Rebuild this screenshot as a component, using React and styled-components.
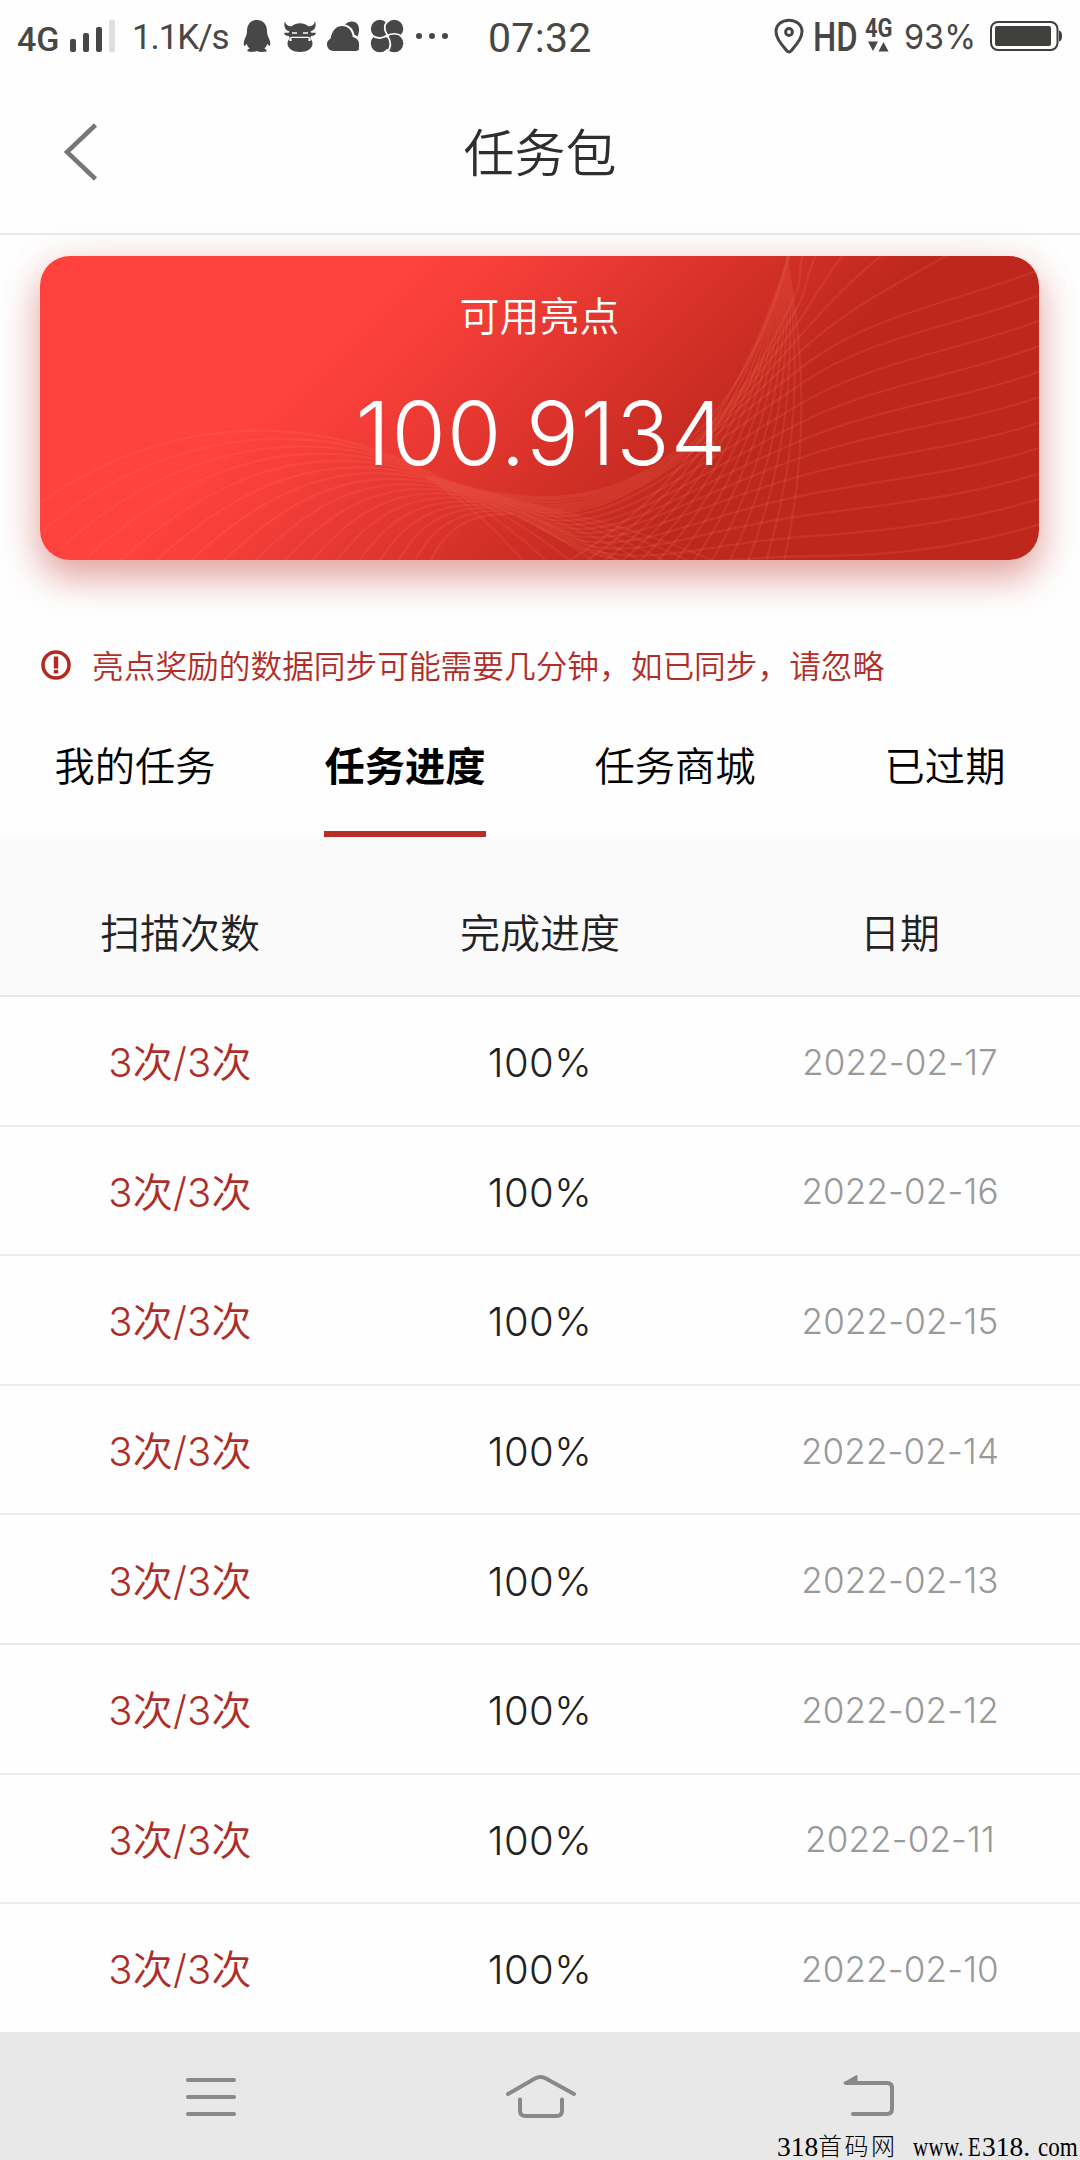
import React from "react";
import styled, { createGlobalStyle } from "styled-components";

const CJK = `"Noto Sans CJK SC", sans-serif`;

const GlobalStyle = createGlobalStyle`
  * { box-sizing: border-box; }
  html, body { margin: 0; padding: 0; background: #fefefe; }
  body { font-family: Inter, ${CJK}; -webkit-font-smoothing: antialiased; }
`;

const Screen = styled.div`
  width: 1080px;
  height: 2160px;
  display: flex;
  flex-direction: column;
  overflow: hidden;
  background: #fefefe;
`;

/* ---------- status bar ---------- */

const StatusBar = styled.header`
  height: 74px;
  flex: none;
  display: flex;
  align-items: flex-start;
  justify-content: space-between;
  padding: 0 17px;
  color: #474747;
`;

const StatusGroup = styled.div`
  display: flex;
  align-items: flex-start;
  height: 74px;
`;

const StatusText = styled.span`
  display: block;
  flex: none;
  width: ${(p) => p.$width}px;
  margin-right: ${(p) => p.$gap || 0}px;
  padding-top: ${(p) => p.$top}px;
  font-family: ${(p) => p.$family || "Roboto"}, sans-serif;
  font-size: ${(p) => p.$size}px;
  font-weight: ${(p) => p.$weight || 400};
  letter-spacing: ${(p) => p.$spacing || 0}px;
  line-height: 1;
  white-space: nowrap;
  transform: scaleX(${(p) => p.$stretch || 1});
  transform-origin: left center;
`;

const StatusIcon = styled.svg`
  display: block;
  flex: none;
  margin-right: ${(p) => p.$gap || 0}px;
`;

const NetworkStack = styled.div`
  width: 28px;
  margin-right: 11px;
  display: flex;
  flex-direction: column;
`;

/* ---------- title bar ---------- */

const TitleBar = styled.div`
  height: 161px;
  flex: none;
  display: grid;
  grid-template-columns: 160px 1fr 160px;
  align-items: center;
  border-bottom: 2px solid #e8e8e8;
`;

const BackButton = styled.button`
  border: 0;
  padding: 0 0 3px 60px;
  background: none;
  height: 100%;
  display: flex;
  align-items: center;
`;

const Title = styled.h1`
  margin: 0;
  padding-bottom: 6px;
  text-align: center;
  font: 350 51px/1 ${CJK};
  color: #2e2e2e;
`;

/* ---------- balance card ---------- */

const Card = styled.section`
  flex: none;
  width: 999px;
  height: 304px;
  margin: 21px auto 0 40px;
  border-radius: 30px;
  overflow: hidden;
  display: grid;
  background: linear-gradient(135deg, #ff423e 28%, #f83f3a 35%, #bd271c 69%);
`;

const CardShadow = styled.div`
  flex: none;
  height: 325px;
  ${Card} {
    box-shadow: 0 18px 36px rgba(190, 40, 30, 0.38), 0 4px 44px rgba(200, 60, 50, 0.1);
  }
`;

const Waves = styled.svg`
  grid-area: 1 / 1;
  display: block;
`;

const Balance = styled.div`
  grid-area: 1 / 1;
  display: flex;
  flex-direction: column;
  align-items: center;
  color: #fff;
  position: relative;
`;

const BalanceLabel = styled.div`
  margin-top: 38px;
  font: 350 40px/40px ${CJK};
`;

const BalanceValue = styled.div`
  margin-top: 55px;
  padding-left: 4px;
  font: 300 88px/88px Inter, sans-serif;
  letter-spacing: 1.3px;
`;

/* ---------- notice ---------- */

const Notice = styled.div`
  flex: none;
  margin-top: 80px;
  height: 50px;
  padding-left: 40px;
  display: flex;
  align-items: center;
  color: #b22d27;
  font: 350 31.7px/50px ${CJK};
  white-space: nowrap;
`;

const NoticeText = styled.span`
  margin-left: 19px;
  padding-bottom: 3px;
`;

/* ---------- tabs ---------- */

const Tabs = styled.nav`
  flex: none;
  height: 147px;
  display: grid;
  grid-template-columns: repeat(4, 1fr);
  justify-items: center;
`;

const Tab = styled.button`
  border: 0;
  border-bottom: 6px solid ${(p) => (p.$active ? "#b72d27" : "transparent")};
  padding: 7px 0 0;
  background: none;
  font: ${(p) => (p.$active ? 700 : 350)} 40.3px/1 ${CJK};
  color: #000;
  height: 147px;
`;

/* ---------- table ---------- */

const Row = styled.div`
  flex: none;
  display: grid;
  grid-template-columns: repeat(3, 1fr);
  align-items: center;
  justify-items: center;
  height: 129.6px;
  padding-top: 5px;
  border-bottom: 2px solid #ebebeb;
`;

const HeadRow = styled(Row)`
  height: 160px;
  padding-top: 30px;
  background: #fafafa;
  border-bottom-color: #e8e8e8;
  font: 350 40px/1 ${CJK};
  color: #222;
`;

const Table = styled.main`
  flex: 1;
  overflow: hidden;
  display: flex;
  flex-direction: column;
`;

const Count = styled.span`
  font: 350 40px/1 Inter, ${CJK};
  letter-spacing: 0.2px;
  color: #ad2d27;
`;

const Percent = styled.span`
  font: 300 40px/1 Inter, sans-serif;
  letter-spacing: 0.5px;
  color: #222;
`;

const DateText = styled.time`
  padding-bottom: 2px;
  font: 300 35px/1 Inter, sans-serif;
  letter-spacing: 0.15px;
  color: #999;
`;

/* ---------- navigation ---------- */

const NavBar = styled.footer`
  flex: none;
  height: 128px;
  display: grid;
  grid-template-columns: 1fr;
  background: #e8e8e8;
`;

const NavIcons = styled.div`
  grid-area: 1 / 1;
  display: flex;
  padding: 40px 0 0 182px;
  height: 90px;
`;

const NavIcon = styled.svg`
  display: block;
  flex: none;
  margin-right: ${(p) => p.$gap || 0}px;
`;

const Watermark = styled.div`
  grid-area: 1 / 1;
  align-self: end;
  justify-self: end;
  display: flex;
  height: 28px;
  color: #000;
  white-space: nowrap;
`;

const WatermarkPart = styled.span`
  flex: none;
  width: ${(p) => p.$width}px;
  margin-right: ${(p) => p.$gap || 0}px;
  font-family: ${(p) => (p.$cjk ? CJK : `"Liberation Serif", serif`)};
  font-size: ${(p) => p.$size || 27.5}px;
  font-weight: ${(p) => (p.$cjk ? 300 : 400)};
  line-height: ${(p) => (p.$cjk ? 25 : 29)}px;
  letter-spacing: ${(p) => p.$spacing || 0}px;
  transform: scaleX(${(p) => p.$stretch || 1});
  transform-origin: left center;
`;

/* ---------- wave pattern ---------- */

const lerp = (a, b, t) => a + (b - a) * t;
const rad = (d) => (d * Math.PI) / 180;
const n1 = (v) => v.toFixed(1);

const ENDS = [[750, -4], [764, -4], [778, -4], [806, -4], [850, -8], [920, -8]];
for (let i = 0; i <= 10; i++) ENDS.push([1004, 12 + i * 25.5]);
const KNEES = [[741, 27], [757, 35], [758, 50], [759, 65], [760, 80], [761, 95], [762, 111],
  [762, 127], [762, 147], [762, 166], [762, 184], [763, 201], [764, 219], [765, 239], [768, 259], [772, 280], [780, 300]];

const sweep = ENDS.map((e, k) => {
  const t = k / 16;
  const q = KNEES[k];
  const a = rad(k < 6 ? lerp(72, 38, k / 6) : lerp(38, 0, (k - 6) / 10));
  const b = rad(lerp(20, 36, t));
  const endA = rad(k < 6 ? lerp(72, 22, k / 6) : lerp(22, 17, (k - 6) / 10));
  const p = [lerp(400, 480, t), lerp(222, 258, t)];
  const s = [lerp(-20, 340, t), lerp(262, 470, t)];
  const len = lerp(230, 140, t);
  const l3 = Math.hypot(e[0] - q[0], e[1] - q[1]) / 3;
  const c = [
    [lerp(100, 390, t), lerp(165, 370, t)],
    [p[0] - 150 * Math.cos(b), p[1] - lerp(82, 10, t) * Math.cos(b)],
    p,
    [p[0] + 130 * Math.cos(b), p[1] + 130 * Math.sin(b)],
    [q[0] - len * Math.cos(a), q[1] + len * Math.sin(a)],
    q,
    [q[0] + l3 * Math.cos(a), q[1] - l3 * Math.sin(a)],
    [e[0] - l3 * Math.cos(endA), e[1] + l3 * Math.sin(endA)],
    e,
  ].map((pt) => pt.map(n1).join(" "));
  return `M${s.map(n1).join(" ")}C${c.slice(0, 3).join(" ")}C${c.slice(3, 6).join(" ")}C${c.slice(6).join(" ")}`;
});

const fan = Array.from({ length: 13 }, (_, i) => {
  const t = i / 12;
  return `M${n1(lerp(520, 743, t))} 310C${n1(lerp(650, 768, t))} ${n1(lerp(235, 200, t))} ${n1(lerp(705, 766, t))} ${n1(lerp(130, 100, t))} ${n1(lerp(749, 746, t))} 0`;
});

const weave = Array.from({ length: 9 }, (_, i) => {
  const t = i / 8;
  return `M${n1(lerp(385, 410, t))} ${n1(lerp(220, 226, t))}C${n1(lerp(420, 480, t))} ${n1(lerp(242, 250, t))} ${n1(lerp(455, 580, t))} ${n1(lerp(270, 262, t))} ${n1(lerp(485, 680, t))} 308`;
});

const WavePattern = () => (
  <Waves width="999" height="304" viewBox="0 0 999 304" fill="none" stroke="#ff8468" strokeWidth="2.300">
    <path d={sweep.join("")} strokeOpacity="0.14" />
    <path d={fan.join("")} strokeOpacity="0.14" />
    <path d={weave.join("")} strokeOpacity="0.12" />
  </Waves>
);

/* ---------- status icons ---------- */

const Signal = () => (
  <StatusIcon $gap={16} width="46" height="74" viewBox="70 0 46 74" fill="#474747">
    <rect x="70" y="39" width="6" height="13" rx="2" />
    <rect x="83" y="33" width="6" height="19" rx="2" />
    <rect x="96" y="27" width="6" height="25" rx="2" />
    <rect x="109" y="20" width="6" height="32" rx="1.500" fill="#dedede" />
  </StatusIcon>
);

const AppIcons = () => (
  <StatusIcon $gap={38} width="208" height="74" viewBox="242 0 208 74" fill="#474747">
    <path d="M257 20c-6 0-10 4.500-10 11 0 3-.8 5-2 7.500-1.200 2.400-1.600 5-1 7 .5 1 1.800-.3 2.700-1.800.5 2 1.500 3.600 3 4.800-1.600.6-2.500 1.500-2.300 2.500.3 1.300 7.600 1.200 9.600-.1 2 1.300 9.300 1.400 9.600.1.200-1-.7-1.900-2.300-2.500 1.500-1.200 2.500-2.800 3-4.800.9 1.500 2.200 2.800 2.700 1.800.6-2 .2-4.600-1-7-1.200-2.500-2-4.500-2-7.500 0-6.500-4-11-10-11z" />
    <path d="M285 21c-1.500 5-.4 9 4.500 10.500l-.7 1.200h-4.600c.2 2.300 1.600 3.300 4.800 3.300v3.500c-1 1-1.500 2.300-1.500 4 0 5.300 5.500 8.500 12.500 8.500s12.500-3.200 12.500-8.500c0-1.700-.5-3-1.500-4v-3.500c3.200 0 4.600-1 4.800-3.300h-4.600l-.7-1.200c4.900-1.500 6-5.500 4.500-10.500-.7 3.700-2.700 5.300-6.500 5.300-2.500-2.100-5.500-3-8.500-3s-6 .9-8.500 3c-3.800 0-5.800-1.600-6.500-5.300z" />
    <path d="M288.500 38.500l3.500-1.200h16l3.500 1.200M292 33h5M303 33h5" fill="none" stroke="#fefefe" strokeWidth="1.300" />
    <path d="M290.500 38.500v2.500M309.500 38.500v2.500" stroke="#fefefe" strokeWidth="2.200" />
    <path d="M334 51c-4 0-7-2.800-7-6.500 0-3 1.600-4.800 3.600-5.900C332 30.500 336.500 26 342 26c6 0 10 4.200 10.800 11 4 .8 6.200 3.500 6.200 7v4c0 2-1 3-3 3z" />
    <path d="M345 24.500c2-2 4.200-3 7-3 4.200 0 7 3.200 7 7.500 0 3-.4 5.500-1.600 7.500l-3-2c-.9-5-4-8.700-9.400-10z" />
    <circle cx="379.800" cy="28.800" r="9" />
    <circle cx="394.300" cy="28.800" r="9" />
    <circle cx="394.300" cy="43.300" r="9" />
    <circle cx="379.800" cy="43.300" r="9" />
    <path d="M388 20.500c-4 4-4.500 9-.7 14.500M403 36.500c-5-3-11-3.500-15.700-1M387 52c4-4 4.500-10 .3-16.500M371.500 35c5 4 10.500 4 15.800.3" fill="none" stroke="#fefefe" strokeWidth="1.700" />
    <circle cx="419" cy="36" r="3" />
    <circle cx="432" cy="36" r="3" />
    <circle cx="445" cy="36" r="3" />
  </StatusIcon>
);

const LocationPin = () => (
  <StatusIcon $gap={9} width="30" height="74" viewBox="774 0 30 74" fill="none" stroke="#474747">
    <path d="M789 52c-1 0-1.700-.5-2.300-1.300C781 43.500 776 38 776 31.500 776 25 781.500 20.300 789 20.300s13 4.700 13 11.200c0 6.500-5 12-10.700 19.200-.6.800-1.300 1.300-2.300 1.300z" strokeWidth="3" />
    <circle cx="789" cy="32" r="3.400" strokeWidth="3" />
  </StatusIcon>
);

const Battery = () => (
  <StatusIcon width="73" height="74" viewBox="990 0 73 74">
    <rect x="991" y="22" width="66.500" height="28" rx="7" fill="none" stroke="#3e3e3e" strokeWidth="2" />
    <rect x="995" y="26" width="56" height="20" rx="2" fill="#3f403c" />
    <path d="M1059 30.500c2 .5 3 2 3 5.500s-1 5-3 5.500z" fill="#3e3e3e" />
  </StatusIcon>
);

const tabs = ["我的任务", "任务进度", "任务商城", "已过期"];
const days = [17, 16, 15, 14, 13, 12, 11, 10];

export default function App() {
  return (
    <Screen>
      <GlobalStyle />
      <StatusBar>
        <StatusGroup>
          <StatusText $width={43} $gap={10} $top={22} $size={34} $weight={500}>4G</StatusText>
          <Signal />
          <StatusText $width={98} $gap={12} $top={20} $size={35} $spacing={-1.1}>1.1K/s</StatusText>
          <AppIcons />
          <StatusText $width={110} $top={18} $size={41} $spacing={0.3}>07:32</StatusText>
        </StatusGroup>
        <StatusGroup>
          <LocationPin />
          <StatusText $width={42} $gap={10} $top={17} $size={41} $weight={500} $stretch={0.8}>HD</StatusText>
          <NetworkStack>
            <StatusText $width={27} $top={16} $size={25} $weight={700} $stretch={0.88}>4G</StatusText>
            <svg width="24" height="11" viewBox="0 0 24 11" fill="#474747">
              <path d="M3 .5h10l-5 9.500zM13.500 10.500h10l-5-9.500z" />
            </svg>
          </NetworkStack>
          <StatusText $width={75} $gap={11} $top={20} $size={34.5} $family="Inter" $stretch={0.94}>93%</StatusText>
          <Battery />
        </StatusGroup>
      </StatusBar>

      <TitleBar>
        <BackButton aria-label="返回">
          <svg width="40" height="60" viewBox="0 0 40 60" fill="none" stroke="#777" strokeWidth="4.500">
            <path d="M35.500 3L7 30 35.500 57" />
          </svg>
        </BackButton>
        <Title>任务包</Title>
      </TitleBar>

      <CardShadow>
        <Card>
          <WavePattern />
          <Balance>
            <BalanceLabel>可用亮点</BalanceLabel>
            <BalanceValue>100.9134</BalanceValue>
          </Balance>
        </Card>
      </CardShadow>

      <Notice>
        <svg width="33" height="32" viewBox="0 0 33 32" fill="none" stroke="#b22a24">
          <circle cx="16" cy="16" r="13" strokeWidth="3.600" />
          <path d="M16 7.500v12M16 21v3.500" strokeWidth="4.400" />
        </svg>
        <NoticeText>亮点奖励的数据同步可能需要几分钟，如已同步，请忽略</NoticeText>
      </Notice>

      <Tabs>
        {tabs.map((t, i) => (
          <Tab key={t} $active={i === 1}>{t}</Tab>
        ))}
      </Tabs>

      <Table>
        <HeadRow>
          <span>扫描次数</span>
          <span>完成进度</span>
          <span>日期</span>
        </HeadRow>
        {days.map((d) => (
          <Row key={d}>
            <Count>3次/3次</Count>
            <Percent>100%</Percent>
            <DateText>2022-02-{d}</DateText>
          </Row>
        ))}
      </Table>

      <NavBar>
        <NavIcons>
          <NavIcon $gap={265} width="58" height="50" viewBox="182 2072 58 50" stroke="#898989" strokeWidth="4" strokeLinecap="round">
            <path d="M188 2080h46M188 2097h46M188 2114h46" />
          </NavIcon>
          <NavIcon $gap={259} width="76" height="50" viewBox="505 2072 76 50" fill="none" stroke="#898989" strokeWidth="4" strokeLinecap="round" strokeLinejoin="round">
            <path d="M508 2094l27-15.500q5.500-3 11 0l28 15.500M520 2099.500v11q0 5.500 5.500 5.500h31q5.500 0 5.500-5.500v-11" />
          </NavIcon>
          <NavIcon width="60" height="50" viewBox="840 2072 60 50" fill="none" stroke="#898989" strokeWidth="4" strokeLinecap="round">
            <path d="M846 2083h41q5 0 5 5v21q0 5-5 5h-34" />
            <path d="M844.500 2083l12-7v7z" fill="#898989" strokeWidth="2" strokeLinejoin="round" />
          </NavIcon>
        </NavIcons>
        <Watermark>
          <WatermarkPart $width={41}>318</WatermarkPart>
          <WatermarkPart $width={82} $gap={13} $cjk $size={24} $spacing={2.5}>首码网</WatermarkPart>
          <WatermarkPart $width={55} $stretch={0.76} $spacing={0.6}>www.</WatermarkPart>
          <WatermarkPart $width={14} $stretch={0.76}>E</WatermarkPart>
          <WatermarkPart $width={56}>318.</WatermarkPart>
          <WatermarkPart $width={42} $stretch={0.84}>com</WatermarkPart>
        </Watermark>
      </NavBar>
    </Screen>
  );
}
